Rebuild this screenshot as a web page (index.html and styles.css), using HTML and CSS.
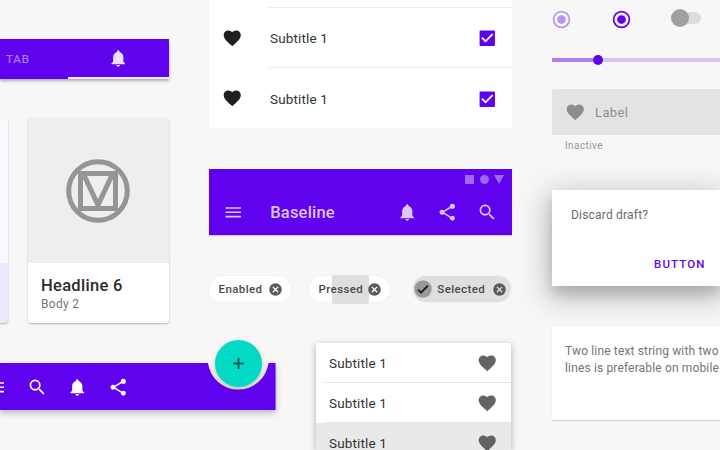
FILE: index.html
```html
<!DOCTYPE html>
<html lang="en">
<head>
<meta charset="utf-8">
<title>Baseline components</title>
<link rel="stylesheet" href="styles.css">
</head>
<body>
<svg class="defs" aria-hidden="true">
  <symbol id="bell" viewBox="0 0 24 24"><path d="M12 22c1.1 0 2-.9 2-2h-4c0 1.1.9 2 2 2zm6-6v-5c0-3.07-1.63-5.64-4.5-6.32V4c0-.83-.67-1.500-1.500-1.500s-1.500.67-1.500 1.500v.68C7.640 5.360 6 7.920 6 11v5l-2 2v1h16v-1l-2-2z"/></symbol>
  <symbol id="heart" viewBox="0 0 24 24"><path d="M12 21.350l-1.450-1.320C5.400 15.360 2 12.280 2 8.500 2 5.420 4.420 3 7.500 3c1.740 0 3.410.81 4.500 2.090C13.090 3.810 14.760 3 16.500 3 19.580 3 22 5.420 22 8.500c0 3.780-3.400 6.860-8.550 11.540L12 21.350z"/></symbol>
  <symbol id="menu" viewBox="0 0 24 24"><path d="M3 18h18v-2H3v2zm0-5h18v-2H3v2zm0-7v2h18V6H3z"/></symbol>
  <symbol id="search" viewBox="0 0 24 24"><path d="M15.500 14h-.79l-.28-.27A6.470 6.470 0 0 0 16 9.500 6.500 6.500 0 1 0 9.500 16c1.610 0 3.090-.59 4.230-1.570l.27.28v.79l5 4.990L20.490 19l-4.990-5zm-6 0a4.500 4.500 0 1 1 0-9 4.500 4.500 0 0 1 0 9z"/></symbol>
  <symbol id="share" viewBox="0 0 24 24"><path d="M18 16.080c-.76 0-1.440.3-1.960.77L8.910 12.700c.05-.23.09-.46.09-.7s-.04-.47-.09-.7l7.050-4.110c.54.5 1.250.81 2.040.81a3 3 0 1 0-3-3c0 .24.04.47.09.7L8.040 9.810A3 3 0 1 0 6 15c.79 0 1.500-.31 2.040-.81l7.120 4.160c-.05.21-.08.43-.08.65a2.920 2.920 0 1 0 2.920-2.920z"/></symbol>
  <symbol id="checkbox" viewBox="0 0 24 24"><path d="M20 3H4a1 1 0 0 0-1 1v16a1 1 0 0 0 1 1h16a1 1 0 0 0 1-1V4a1 1 0 0 0-1-1zm-10 14l-5-5 1.410-1.410L10 14.170l7.590-7.590L19 8l-9 9z"/></symbol>
  <symbol id="cancel" viewBox="0 0 24 24"><path d="M12 2a10 10 0 1 0 0 20 10 10 0 0 0 0-20zm5 13.590L15.590 17 12 13.410 8.410 17 7 15.590 10.590 12 7 8.410 8.410 7 12 10.590 15.590 7 17 8.410 13.410 12 17 15.590z"/></symbol>
  <symbol id="radio" viewBox="0 0 24 24"><path d="M12 7a5 5 0 1 0 0 10 5 5 0 0 0 0-10zm0-5a10 10 0 1 0 0 20 10 10 0 0 0 0-20zm0 18a8 8 0 1 1 0-16 8 8 0 0 1 0 16z"/></symbol>
</svg>

<main class="board">
  <section class="col col-left">
    <nav class="tabs">
      <span class="tab tab-text">TAB</span>
      <span class="tab tab-active"><svg class="icon"><use href="#bell"/></svg></span>
    </nav>
    <div class="cards">
      <article class="card card-tinted"><div class="media"></div><div class="card-body"></div></article>
      <article class="card">
        <div class="media">
          <svg class="logo" viewBox="0 0 64 64"><g fill="none" stroke="#959595" stroke-width="5"><circle cx="32" cy="32" r="29.300"/><path d="M14.500 14.500h35v35h-35z M17.500 15l14.500 31L46.500 15"/></g></svg>
        </div>
        <div class="card-body"><h2 class="headline">Headline 6</h2><p class="body2">Body 2</p></div>
      </article>
    </div>
    <div class="bottom-bar">
      <svg class="bar-shape" viewBox="0 0 276 47"><path d="M0 0H208A30.500 30.500 0 0 0 268.500 0H275.600V47H0z"/></svg>
      <div class="bar-icons">
        <svg class="icon"><use href="#menu"/></svg>
        <svg class="icon"><use href="#search"/></svg>
        <svg class="icon"><use href="#bell"/></svg>
        <svg class="icon"><use href="#share"/></svg>
      </div>
      <button class="fab"><svg viewBox="0 0 12 12"><path d="M6 0v12M0 6h12"/></svg></button>
    </div>
  </section>

  <section class="col col-mid">
    <ul class="list">
      <li class="stub"></li>
      <li><svg class="icon"><use href="#heart"/></svg><div class="list-main"><span class="subtitle">Subtitle 1</span><svg class="icon check"><use href="#checkbox"/></svg></div></li>
      <li><svg class="icon"><use href="#heart"/></svg><div class="list-main"><span class="subtitle">Subtitle 1</span><svg class="icon check"><use href="#checkbox"/></svg></div></li>
    </ul>
    <header class="app-bar">
      <svg class="status" viewBox="0 0 40 10"><path d="M1 1h9v9H1z"/><circle cx="20.500" cy="5.500" r="4.500"/><path d="M30 1h10l-5 9z"/></svg>
      <div class="app-row">
        <svg class="icon"><use href="#menu"/></svg>
        <span class="title">Baseline</span>
        <svg class="icon"><use href="#bell"/></svg>
        <svg class="icon"><use href="#share"/></svg>
        <svg class="icon"><use href="#search"/></svg>
      </div>
    </header>
    <div class="chips">
      <span class="chip chip-enabled"><span class="chip-label">Enabled</span><svg class="close"><use href="#cancel"/></svg></span>
      <span class="chip chip-pressed"><span class="chip-label">Pressed</span><svg class="close"><use href="#cancel"/></svg></span>
      <span class="chip chip-selected"><svg class="avatar" viewBox="0 0 18 18"><circle cx="9" cy="9" r="8.700" fill="#999"/><path d="M4 9.600l3 3L13.800 5.800" fill="none" stroke="#222" stroke-width="2"/></svg><span class="chip-label">Selected</span><svg class="close"><use href="#cancel"/></svg></span>
    </div>
    <ul class="menu">
      <li><span class="subtitle">Subtitle 1</span><svg class="icon"><use href="#heart"/></svg></li>
      <li><span class="subtitle">Subtitle 1</span><svg class="icon"><use href="#heart"/></svg></li>
      <li class="hovered"><span class="subtitle">Subtitle 1</span><svg class="icon"><use href="#heart"/></svg></li>
    </ul>
  </section>

  <section class="col col-right">
    <div class="controls">
      <svg class="radio faded"><use href="#radio"/></svg>
      <svg class="radio"><use href="#radio"/></svg>
      <span class="switch"><span class="thumb"></span></span>
    </div>
    <div class="slider"><span class="filled"></span><span class="knob"></span><span class="rest"></span></div>
    <div class="field"><svg class="icon"><use href="#heart"/></svg><span class="field-label">Label</span></div>
    <p class="helper">Inactive</p>
    <div class="dialog"><p class="dialog-text">Discard draft?</p><button class="text-button">BUTTON</button></div>
    <div class="banner"><p>Two line text string with two<br>lines is preferable on mobile</p></div>
  </section>
</main>
</body>
</html>
```
FILE: styles.css
```css
* { box-sizing: border-box; }
body {
  margin: 0;
  width: 720px;
  height: 450px;
  overflow: hidden;
  background: #f7f7f7;
  color: #333;
  font-family: Roboto, "Liberation Sans", sans-serif;
}
h2, p, ul { margin: 0; padding: 0; }
ul { list-style: none; }
button { border: 0; padding: 0; background: none; font-family: inherit; }
svg { display: block; flex: none; fill: currentColor; }
.defs { position: absolute; width: 0; height: 0; }
.icon { width: 20.500px; height: 20.500px; }

.board { display: grid; grid-template-columns: 208.500px 303px 208.500px; height: 450px; }
.col { display: flex; flex-direction: column; min-width: 0; }
.col-right { margin-left: 40px; }

.tabs {
  display: flex;
  width: 168.500px;
  height: 40px;
  margin-top: 38.500px;
  background: #6002ee;
  box-shadow: 0 2px 3px rgba(0, 0, 0, .3);
}
.tab { display: flex; align-items: center; }
.tab-text { width: 68px; padding-left: 6px; font-size: 11.500px; font-weight: 500; letter-spacing: .8px; color: #a878f4; }
.tab-active { flex: 1; justify-content: center; padding-top: 1px; border-bottom: 2px solid #f1e8fe; color: #ecdffe; }

.cards { display: flex; gap: 20.500px; margin-top: 39.900px; }
.card {
  width: 140.500px;
  height: 205px;
  border-radius: 3px;
  overflow: hidden;
  background: #fff;
  box-shadow: 0 1px 2px rgba(0, 0, 0, .27);
}
.media { display: grid; place-items: center; height: 144.500px; background: #eee; }
.logo { width: 64px; height: 64px; }
.card-tinted { width: 7.500px; border-radius: 0 3px 3px 0; background: #efe7fd; }
.card-tinted .media { background: #faf7ff; }
.card-body { padding: 13.500px 13px; }
.headline { font-size: 16.500px; line-height: 20px; font-weight: 500; letter-spacing: .3px; color: #2b2b2b; }
.body2 { font-size: 12px; line-height: 16px; letter-spacing: .3px; color: #777; }

.bottom-bar { position: relative; width: 276px; height: 47px; margin-top: 40px; color: #fff; }
.bar-shape { width: 276px; height: 47px; fill: #6002ee; filter: drop-shadow(0 3px 3px rgba(0, 0, 0, .25)); }
.bar-icons { position: absolute; left: -14px; top: 13.500px; display: flex; gap: 20px; }
.fab {
  position: absolute;
  left: 214.500px;
  top: -23.500px;
  display: grid;
  place-items: center;
  width: 47.500px;
  height: 47.500px;
  border-radius: 50%;
  background: #03dac5;
  box-shadow: 0 2px 4px rgba(0, 0, 0, .22);
}
.fab svg { width: 11px; height: 11px; stroke: #075c55; stroke-width: 2; }

.list { height: 128px; background: #fff; color: #1f1f1f; }
.list li { display: flex; align-items: center; height: 60.500px; padding-left: 13.500px; }
.list .stub { height: 7.500px; padding-left: 60.500px; }
.list .stub::after { content: ""; flex: 1; align-self: flex-end; height: 1px; background: #ececec; }
.list-main { display: flex; align-items: center; justify-content: space-between; flex: 1; height: 60.500px; margin-left: 26.500px; padding: 2px 14px 0 1px; border-bottom: 1px solid #ececec; }
.list li:last-child .list-main { border-color: transparent; }
.subtitle { font-size: 13.500px; letter-spacing: .15px; color: #333; }
.check { color: #6002ee; }

.app-bar { height: 66px; margin-top: 41px; background: #6002ee; color: #dcc7fc; box-shadow: 0 1px 1px #d9c3fa; }
.status { width: 40px; height: 10px; margin: 0 7.500px 0 auto; position: relative; top: 5px; fill: #a068f5; }
.app-row { display: flex; align-items: center; gap: 19.700px; height: 46px; margin-top: 10px; padding: 0 14px; }
.title { flex: 1; padding-left: 7.500px; font-size: 16.500px; font-weight: 500; letter-spacing: .2px; }

.chips { display: flex; height: 26px; margin-top: 41px; }
.chip { position: relative; display: flex; align-items: center; justify-content: space-between; height: 26px; border-radius: 13px; background: #fff; padding: 0 8px 0 10px; box-shadow: 0 0 2px rgba(0, 0, 0, .08); }
.chip-label { position: relative; font-size: 11.500px; font-weight: 500; letter-spacing: .4px; color: #4a4a4a; }
.close { position: relative; width: 15px; height: 15px; color: #5b5b5b; }
.chip-enabled { width: 82px; }
.chip-pressed { width: 81.500px; margin-left: 18px; }
.chip-pressed::before { content: ""; position: absolute; left: 23px; top: -1px; width: 37px; height: 29px; border-radius: 3px; background: #dedede; }
.chip-selected { width: 97.500px; margin-left: 23px; padding: 0 3px 0 1px; background: #dfdfdf; }
.chip-selected .chip-label { left: -1px; }
.avatar { width: 18px; height: 18px; }

.menu { width: 195.500px; height: 107px; margin: 40.500px 0 0 107px; border-radius: 2px 2px 0 0; background: #fff; box-shadow: 0 2px 7px rgba(0, 0, 0, .3); }
.menu li { display: flex; align-items: center; justify-content: space-between; height: 40px; padding: 0 13.500px; color: #636363; background: linear-gradient(#e4e4e4, #e4e4e4) 9px 100% / 100% 1px no-repeat; }
.menu .icon { position: relative; top: .5px; }
.menu .hovered { height: 41px; background: #e9e9e9; }

.controls { display: flex; align-items: center; height: 21px; margin-top: 8.500px; }
.radio { width: 21px; height: 21px; margin-right: 39.500px; color: #6002ee; }
.radio:first-child { margin-left: -1px; }
.faded { opacity: .4; }
.switch { flex: none; width: 30px; height: 12px; margin-top: -2px; border-radius: 6px; background: #dcdcdc; display: flex; align-items: center; margin-left: -1px; }
.thumb { width: 18px; height: 18px; border-radius: 50%; background: #a0a0a0; }
.slider { display: flex; align-items: center; height: 10px; margin-top: 25.500px; }
.filled { width: 41.500px; height: 3.500px; background: #ae80ee; }
.knob { width: 10px; height: 10px; border-radius: 50%; background: #6002ee; }
.rest { flex: 1; height: 3.500px; background: #d7c4f5; }
.field { display: flex; align-items: center; gap: 10px; height: 46px; margin-top: 24px; padding-left: 13px; background: #e3e3e3; color: #8d8d8d; border-radius: 2px 0 0 0; }
.field-label { font-size: 13px; letter-spacing: .4px; color: #8e8e8e; }
.helper { margin: 4px 0 0 13.500px; font-size: 10px; line-height: 14px; letter-spacing: .4px; color: #9a9a9a; }
.dialog { height: 96px; margin-top: 36.500px; padding: 17.500px 14.500px 0 19.500px; background: #fff; box-shadow: 0 8px 10px rgba(0, 0, 0, .12), 0 8px 28px 4px rgba(0, 0, 0, .25); }
.dialog-text { font-size: 12px; line-height: 16px; letter-spacing: .2px; color: #6b6b6b; }
.text-button { display: block; margin: 32.500px 0 0 auto; font-size: 11.500px; line-height: 16px; font-weight: 500; letter-spacing: 1.100px; color: #6002ee; }
.banner { position: relative; height: 93.500px; margin-top: 40.500px; padding: 17px 0 0 13.500px; background: #fff; box-shadow: 0 1px 1px rgba(0, 0, 0, .12); white-space: nowrap; }
.banner p { font-size: 12px; line-height: 16.500px; letter-spacing: .15px; color: #757575; }
```
